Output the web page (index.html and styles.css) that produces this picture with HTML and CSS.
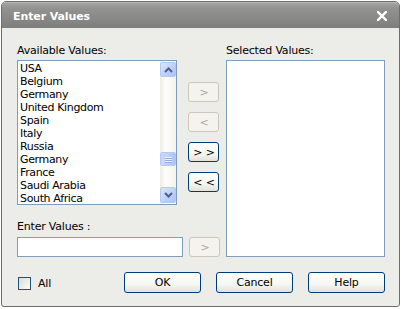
FILE: index.html
```html
<!DOCTYPE html>
<html lang="en">
<head>
    <meta charset="UTF-8">
    <title>Enter Values</title>
    <link rel="stylesheet" href="styles.css">
</head>
<body>
    <div class="dialog">
        <div class="titlebar">
            <span class="title">Enter Values</span>
            <svg class="close" width="10" height="10" viewBox="0 0 10 10">
                <path d="M1 1 L9 9 M9 1 L1 9" stroke="#fff" stroke-width="2.4" stroke-linecap="square"/>
            </svg>
        </div>

        <div class="content">
            <div class="main">
                <div class="left">
                    <div class="label">Available Values:</div>
                    <div class="pick-row">
                        <div class="listbox">
                            <div class="items">
                                <div>USA</div>
                                <div>Belgium</div>
                                <div>Germany</div>
                                <div>United Kingdom</div>
                                <div>Spain</div>
                                <div>Italy</div>
                                <div>Russia</div>
                                <div>Germany</div>
                                <div>France</div>
                                <div>Saudi Arabia</div>
                                <div>South Africa</div>
                            </div>
                            <div class="scrollbar">
                                <div class="sb-btn">
                                    <svg width="9" height="6" viewBox="0 0 9 6"><path d="M1 5 L4.5 1.5 L8 5" fill="none" stroke="#4d6185" stroke-width="2"/></svg>
                                </div>
                                <div class="sb-track">
                                    <div class="sb-thumb">
                                        <svg width="7" height="7" viewBox="0 0 7 7"><path d="M0 1.5 H7 M0 3.5 H7 M0 5.5 H7" stroke="#eef3fe" stroke-width="1"/><path d="M0 2.5 H7 M0 4.5 H7 M0 6.5 H7" stroke="#8fa9e0" stroke-width="1"/></svg>
                                    </div>
                                </div>
                                <div class="sb-btn down">
                                    <svg width="9" height="6" viewBox="0 0 9 6"><path d="M1 1 L4.5 4.5 L8 1" fill="none" stroke="#4d6185" stroke-width="2"/></svg>
                                </div>
                            </div>
                        </div>
                        <div class="movers">
                            <button class="btn small" disabled>&gt;</button>
                            <button class="btn small" disabled>&lt;</button>
                            <button class="btn small">&gt; &gt;</button>
                            <button class="btn small">&lt; &lt;</button>
                        </div>
                    </div>
                    <div class="label enter-label">Enter Values :</div>
                    <div class="enter-row">
                        <input type="text" class="enter-input">
                        <button class="btn small" disabled>&gt;</button>
                    </div>
                </div>

                <div class="right">
                    <div class="label">Selected Values:</div>
                    <div class="selected-box"></div>
                </div>
            </div>

            <div class="footer">
                <label class="check">
                    <span class="checkbox"></span>
                    <span>All</span>
                </label>
                <div class="actions">
                    <button class="btn wide">OK</button>
                    <button class="btn wide">Cancel</button>
                    <button class="btn wide">Help</button>
                </div>
            </div>
        </div>
    </div>
</body>
</html>
```

FILE: styles.css
```css
body {
    margin: 0;
    background-color: #ffffff;
    font-family: 'DejaVu Sans', Verdana, sans-serif;
    font-size: 11px;
    line-height: 13px;
    letter-spacing: -0.2px;
    color: #000;
}
.dialog {
    margin: 1px 0 0 1px;
    width: 399px;
    height: 306px;
    box-sizing: border-box;
    border: 1px solid #6c6c6c;
    border-radius: 5px 5px 3px 3px;
    background-color: #ecece9;
    overflow: hidden;
}
.titlebar {
    height: 26px;
    display: flex;
    align-items: center;
    justify-content: space-between;
    padding: 0 12px 0 11px;
    background: linear-gradient(#a4a4a2, #939391 20%, #7e7e7d);
    border-top: 1px solid #b8b8b6;
    box-sizing: border-box;
}
.title {
    color: #ffffff;
    font-weight: bold;
    font-size: 11px;
    letter-spacing: -0.1px;
    padding-top: 1px;
}
.close {
    display: block;
}
.content {
    padding: 16px 14px 0 15px;
}
.main {
    display: flex;
}
.left {
    width: 203px;
}
.label {
    height: 13px;
    margin-bottom: 3px;
}
.pick-row {
    display: flex;
}
.listbox {
    width: 160px;
    height: 145px;
    box-sizing: border-box;
    border: 1px solid #7f9db9;
    background-color: #ffffff;
    display: flex;
}
.items {
    flex: 1;
    padding: 1px 0 0 2px;
    letter-spacing: -0.35px;
    overflow: hidden;
}
.scrollbar {
    width: 16px;
    display: flex;
    flex-direction: column;
    background: linear-gradient(90deg, #eeede6, #fdfdfb 35%, #f3f2ec);
}
.sb-btn {
    height: 15px;
    margin: 1px 0 0 0;
    display: flex;
    align-items: center;
    justify-content: center;
    box-sizing: border-box;
    border: 1px solid #b4c8f6;
    border-radius: 2px;
    background: linear-gradient(135deg, #dbe5fe, #bccffa 60%, #adc2f4);
}
.sb-btn.down {
    margin: 0 0 1px 0;
    height: 16px;
}
.sb-track {
    flex: 1;
}
.sb-thumb {
    margin-top: 75px;
    height: 14px;
    box-sizing: border-box;
    border: 1px solid #b4c8f6;
    border-radius: 2px;
    background: linear-gradient(90deg, #c9d8fd, #bccffa 60%, #adc2f4);
    display: flex;
    align-items: center;
    justify-content: center;
}
.sb-thumb svg {
    display: block;
}
.movers {
    margin: 22px 0 0 11px;
    display: flex;
    flex-direction: column;
    gap: 10px;
}
.btn {
    font-family: inherit;
    font-size: 11px;
    letter-spacing: -0.2px;
    color: #000;
    padding: 0;
    border: 1px solid #003c74;
    border-radius: 3px;
    background: linear-gradient(#ffffff, #f6f6f2 60%, #e3e1d8);
    box-sizing: border-box;
}
.btn:disabled {
    color: #aca899;
    border-color: #cbc8bb;
    background: #f4f3ee;
}
.btn.small {
    width: 31px;
    height: 20px;
    padding-left: 1px;
}
.enter-label {
    margin-top: 15px;
    margin-bottom: 4px;
}
.enter-row {
    display: flex;
    gap: 6px;
}
.enter-input {
    width: 166px;
    height: 20px;
    box-sizing: border-box;
    border: 1px solid #7f9db9;
    background-color: #ffffff;
    margin: 0;
}
.right {
    width: 160px;
    margin-left: 6px;
}
.selected-box {
    height: 197px;
    box-sizing: border-box;
    border: 1px solid #7f9db9;
    background-color: #ffffff;
}
.footer {
    display: flex;
    align-items: center;
    margin-top: 15px;
}
.check {
    display: flex;
    align-items: center;
    gap: 7px;
    margin-left: 1px;
    padding-top: 2px;
}
.checkbox {
    width: 13px;
    height: 13px;
    box-sizing: border-box;
    border: 1px solid #1c5180;
    background: linear-gradient(135deg, #dcdcd5, #fbfbf9);
}
.actions {
    margin-left: auto;
    display: flex;
    gap: 15px;
}
.btn.wide {
    width: 77px;
    height: 21px;
}
```
